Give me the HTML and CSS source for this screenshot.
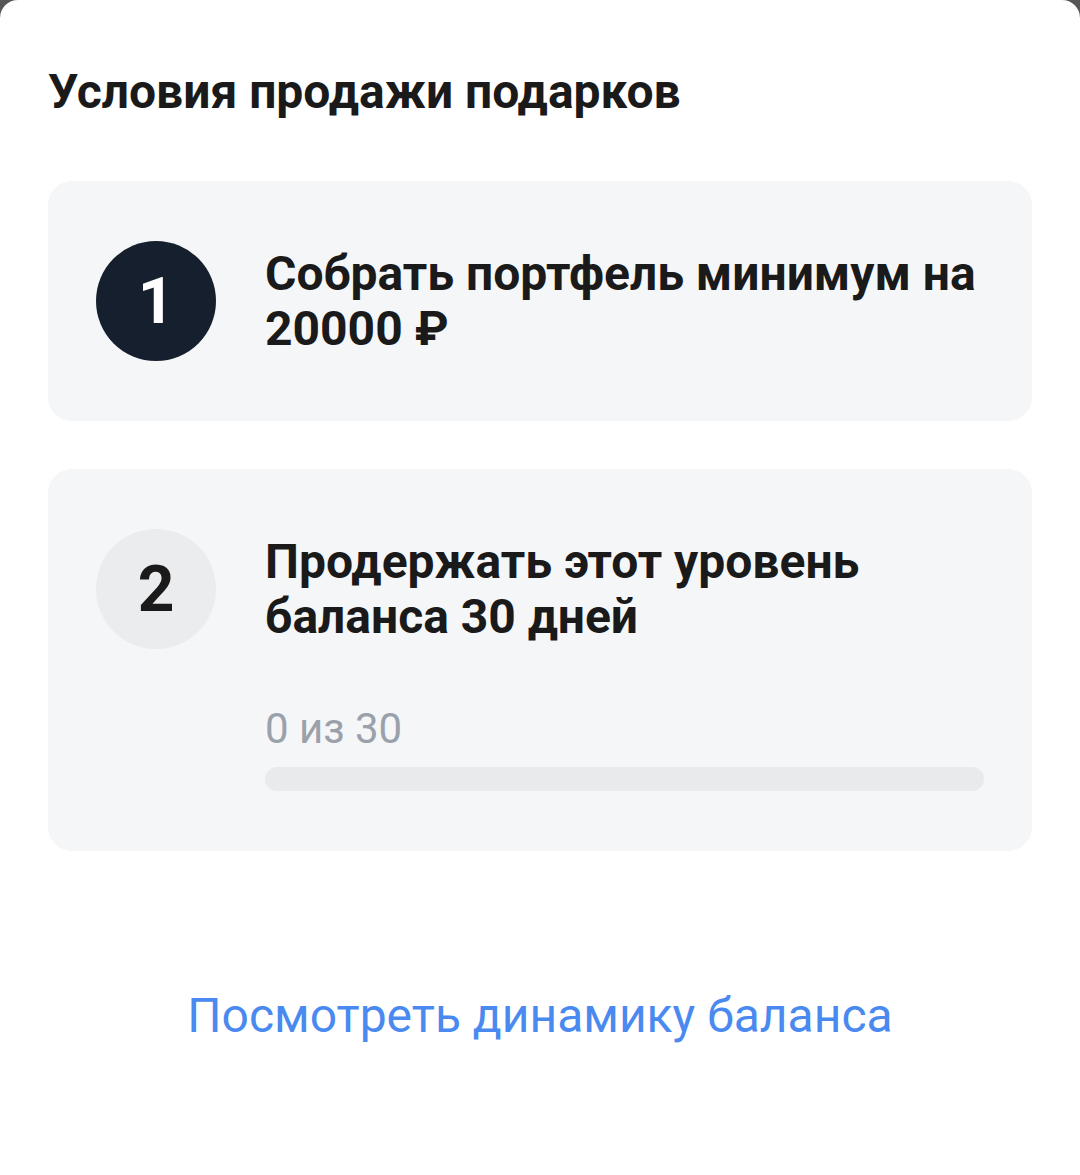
FILE: index.html
```html
<!DOCTYPE html>
<html lang="ru">
<head>
  <meta charset="UTF-8" />
  <meta name="viewport" content="width=device-width, initial-scale=1.0"/>
  <title>Условия продажи подарков</title>
  <link rel="stylesheet" href="styles.css">
</head>
<body>

  <div class="sheet">
    <h1 class="sheet-title">Условия продажи подарков</h1>

    <div class="step">
      <div class="step-row">
        <div class="step-num step-num-done">1</div>
        <div class="step-text">Собрать портфель минимум на 20000 ₽</div>
      </div>
    </div>

    <div class="step">
      <div class="step-row">
        <div class="step-num">2</div>
        <div class="step-text">Продержать этот уровень баланса 30 дней</div>
      </div>
      <div class="progress">
        <div class="progress-label">0 из 30</div>
        <div class="progress-track">
          <div class="progress-fill" style="width: 0%"></div>
        </div>
      </div>
    </div>

    <a class="link" href="#">Посмотреть динамику баланса</a>
  </div>

</body>
</html>
```

FILE: styles.css
```css
html, body {
  height: 100%;
}

body {
  margin: 0;
  background-color: #575757;
  font-family: Roboto, "Noto Sans", Arial, sans-serif;
  color: #1a1a1a;
}

.sheet {
  background-color: #fff;
  min-height: 100%;
  box-sizing: border-box;
  border-radius: 18px 18px 0 0;
  padding: 64px 48px 40px;
  display: flex;
  flex-direction: column;
  gap: 48px;
}

.sheet-title {
  margin: 0 0 13px;
  font-size: 48px;
  font-weight: 700;
  line-height: 56px;
}

.step {
  background-color: #f5f6f8;
  border-radius: 24px;
  padding: 60px 48px;
}

.step-row {
  display: flex;
  align-items: center;
  gap: 49px;
}

.step-num {
  flex: 0 0 120px;
  height: 120px;
  border-radius: 50%;
  background-color: #ebecee;
  display: flex;
  align-items: center;
  justify-content: center;
  font-size: 64px;
  font-weight: 700;
  color: #1a1a1a;
}

.step-num-done {
  background-color: #161f2d;
  color: #fff;
}

.step-text {
  font-size: 48px;
  font-weight: 700;
  line-height: 55px;
}

.progress {
  margin: 56px 0 0 169px;
}

.progress-label {
  font-size: 42px;
  line-height: 48px;
  color: #9aa1aa;
}

.progress-track {
  margin-top: 14px;
  height: 24px;
  border-radius: 12px;
  background-color: #e9eaec;
  overflow: hidden;
}

.progress-fill {
  height: 100%;
  background-color: #161f2d;
}

.link {
  margin-top: 88px;
  align-self: center;
  font-size: 48px;
  color: #4a8af0;
  text-decoration: none;
}
```
